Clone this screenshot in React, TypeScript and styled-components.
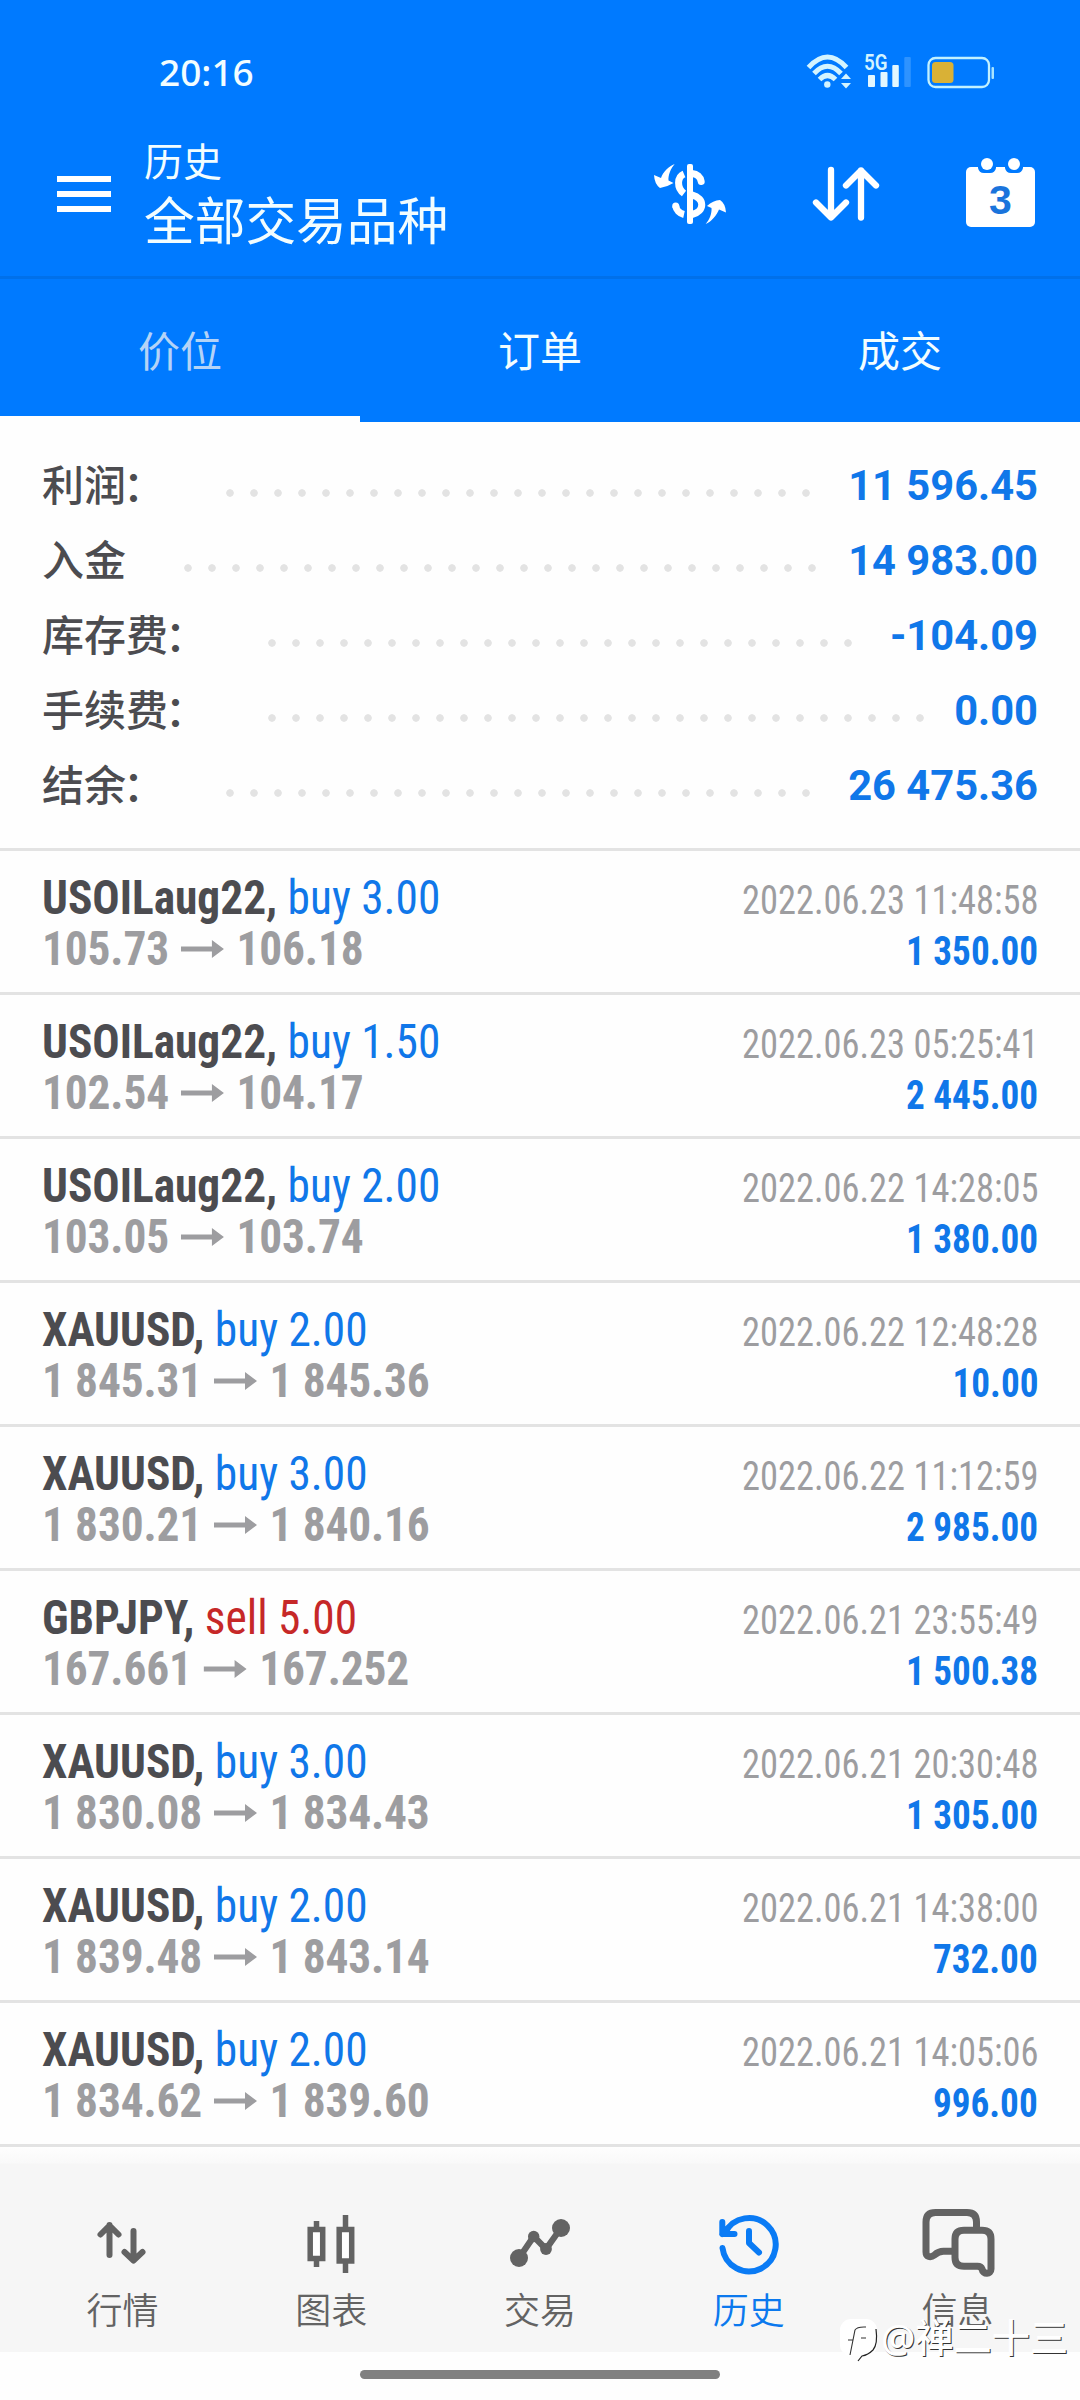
import React from "react";
import styled, { createGlobalStyle } from "styled-components";

const BLUE = "#007aff";
const CJK = `"Noto Sans CJK SC", sans-serif`;

const GlobalStyle = createGlobalStyle`
  * { box-sizing: border-box; }
  body { margin: 0; background: #fff; font-family: Roboto, ${CJK}; }
  svg { display: block; flex: none; }
`;

const Screen = styled.div`
  width: 1080px;
  height: 2400px;
  display: flex;
  flex-direction: column;
  background: #fefefe;
  overflow: hidden;
  position: relative;
`;

const Header = styled.header`
  background: ${BLUE};
  color: #f2fdff;
  height: 422px;
  flex: none;
  display: flex;
  flex-direction: column;
`;

const StatusBar = styled.div`
  height: 130px;
  padding: 14px 80px 0 159px;
  display: flex;
  align-items: center;
  justify-content: space-between;
`;

const Clock = styled.span`
  font: 500 37px/44px "Noto Sans", sans-serif;
`;

const Toolbar = styled.div`
  height: 146px;
  padding: 0 45px 0 57px;
  display: flex;
  align-items: flex-start;
`;

const Burger = styled.div`
  width: 54px;
  margin-top: 46px;
  display: flex;
  flex-direction: column;
  gap: 9px;
  i { height: 6px; background: #fff; }
`;

const Titles = styled.div`
  margin-left: 33px;
  flex: 1;
  font-family: ${CJK};
`;

const Subtitle = styled.div`
  font-size: 39px;
  font-weight: 400;
  line-height: 50px;
  margin-top: 4px;
`;

const Title = styled.div`
  font-size: 50.7px;
  font-weight: 400;
  line-height: 60px;
  margin-top: 4px;
`;

const Actions = styled.div`
  display: flex;
  padding-top: 23px;
`;

const Tabs = styled.div`
  height: 146px;
  border-top: 3px solid #0070ea;
  display: grid;
  grid-template-columns: repeat(3, 1fr);
`;

const Tab = styled.div<{ $active?: boolean }>`
  font-family: ${CJK};
  font-size: 42px;
  font-weight: 400;
  display: flex;
  align-items: center;
  justify-content: center;
  padding-top: 2px;
  color: ${(p) => (p.$active ? "#b4d3f7" : "#f2fdff")};
  border-bottom: 6px solid ${(p) => (p.$active ? "#fefefe" : "transparent")};
`;

const Summary = styled.section`
  height: 429px;
  flex: none;
  padding: 26px 42px 0 42px;
  border-bottom: 3px solid #e3e3e3;
`;

const SummaryRow = styled.div`
  height: 75px;
  display: flex;
  align-items: center;
`;

const SummaryLabel = styled.span`
  font-family: ${CJK};
  font-size: 42px;
  line-height: 62px;
  font-weight: 500;
  color: #4c4c50;
  margin-bottom: 5px;
`;

const Colon = styled.span`
  margin: 0 3px 0 -3px;
`;

const Dots = styled.span<{ $count: number }>`
  margin-left: 58px;
  width: ${(p) => p.$count * 24}px;
  height: 8px;
  margin-top: 15px;
  background: radial-gradient(circle at 4px 4px, #e3e3e3 3.4px, transparent 4.1px) 0 0 / 24px 8px repeat-x;
`;

const SummaryValue = styled.span`
  margin-left: auto;
  font: 700 41.7px/50px Roboto, sans-serif;
  color: #1077e9;
`;

const Deal = styled.article`
  height: 144px;
  flex: none;
  border-bottom: 3px solid #e3e3e3;
  padding: 21px 42px 0;
  display: flex;
  justify-content: space-between;
  font-family: "Roboto Condensed", Roboto, sans-serif;
  font-stretch: 75%;
  white-space: pre;
`;

const Left = styled.div`
  display: flex;
  flex-direction: column;
  transform: scaleX(0.945);
  transform-origin: left;
`;

const Right = styled.div`
  display: flex;
  flex-direction: column;
  align-items: flex-end;
`;

const Line = styled.div`
  font-size: 48px;
  line-height: 51px;
  font-weight: 700;
  color: #4c4c50;
`;

const Side = styled.span<{ $sell?: boolean }>`
  font-weight: 400;
  color: ${(p) => (p.$sell ? "#c62828" : "#1077e9")};
`;

const Prices = styled.div`
  display: flex;
  align-items: center;
  font-size: 48px;
  line-height: 51px;
  font-weight: 700;
  color: #9d9da0;
  letter-spacing: -0.15px;
  svg { margin: 0 13px; }
`;

const Time = styled.div`
  font-size: 40px;
  line-height: 46px;
  color: #9d9da0;
  margin: 6px 0 5px;
  transform: scaleX(0.911);
  transform-origin: right;
`;

const Profit = styled.div`
  font-size: 40px;
  line-height: 46px;
  font-weight: 700;
  color: #1077e9;
  transform: scaleX(0.93);
  transform-origin: right;
`;

const Nav = styled.nav`
  height: 205px;
  flex: none;
  padding: 50px 18px 0;
  display: grid;
  grid-template-columns: repeat(5, 1fr);
  background: linear-gradient(#fefefe 0, #f9f9f9 16px, #f6f6f6 17px);
`;

const NavItem = styled.div<{ $active?: boolean }>`
  display: flex;
  flex-direction: column;
  align-items: center;
  color: ${(p) => (p.$active ? "#0b79ee" : "#636363")};
`;

const NavLabel = styled.span`
  font: 350 36px/44px ${CJK};
  margin-top: -3px;
`;

const HomeArea = styled.div`
  height: 48px;
  display: flex;
  justify-content: center;
  padding-top: 18px;
`;

const HomePill = styled.div`
  width: 360px;
  height: 9px;
  border-radius: 5px;
  background: #808080;
`;

const Watermark = styled.div`
  position: absolute;
  left: 839px;
  top: 2314px;
  display: flex;
  align-items: center;
  color: #fff;
  font: 500 37px/46px "Noto Sans", ${CJK};
  text-shadow: 1px 1px 0 #333;
  white-space: nowrap;
`;

const Handle = styled.span`
  margin-left: 2px;
  font-size: 38.2px;
`;

const StatusIcons = () => (
  <svg width="200" height="44" viewBox="800 50 200 44" fill="none">
    <g stroke="#d3f4ff" strokeWidth="5">
      <path d="M808.5 67.5Q827.5 46.5 846.5 67.5" />
      <path d="M814 73.5Q827.5 59 841 73.5" />
      <path d="M819.5 79.5Q827.5 71.5 835.5 79.5" />
    </g>
    <circle cx="827.3" cy="84.5" r="3.2" fill="#d3f4ff" />
    <path d="M841 79l5-5.5 5 5.5zM841 83l5 5.5 5-5.5z" fill="#d3f4ff" />
    <text x="864" y="70" fill="#d3f4ff" fontFamily="Roboto, sans-serif" fontWeight="600" fontSize="21.5" textLength="23.5" lengthAdjust="spacingAndGlyphs">5G</text>
    <g fill="#e2f7ff">
      <rect x="868" y="75" width="7" height="12" rx="1" />
      <rect x="880.5" y="72" width="7" height="15" rx="1" />
      <rect x="892.3" y="65" width="6.5" height="22" rx="1" />
    </g>
    <rect x="904.3" y="57" width="6.5" height="30" rx="1" fill="#2e93ff" />
    <rect x="928.5" y="58" width="60.5" height="29" rx="7" stroke="#c2f1ff" strokeWidth="2.3" />
    <rect x="932" y="62" width="21.5" height="21" rx="3.5" fill="#d9b136" />
    <rect x="991.5" y="67" width="2.5" height="12" rx="1" fill="#a8e4ff" />
  </svg>
);

const ActionIcons = () => (
  <svg width="385" height="80" viewBox="650 153 385 80" fill="none">
    <g fill="#fff">
      <rect x="687" y="164" width="6" height="60" rx="2" />
      <path d="M674.7 164C669 166 663 172 661 178L654 175Q654.5 184 660 188Q667 187 673.5 183L668.5 180.5C668 175 671 168 674.7 164Z" />
      <path d="M705.7 224C711 222 717 215 719 209.5L726 212.5Q725.5 203.5 720 200Q713 200.5 707 206L711.5 208C712 213 709.5 220 705.7 224Z" />
    </g>
    <g stroke="#fff" strokeWidth="7">
      <path d="M684 174C677 177 676.5 188 684 193.5" />
      <path d="M692 173.5C697 174 700.5 177 701.2 181.5" strokeLinecap="round" />
      <path d="M692 195C705 198 705 211.5 692 214.5" />
      <path d="M675.8 206C676.3 210 679.5 213.5 684 214.5" />
      <path d="M675.7 206V206.1" strokeLinecap="round" />
    </g>
    <g stroke="#fff" strokeWidth="6.3" strokeLinecap="round" strokeLinejoin="round">
      <path d="M831 170V217M816 202.5L831 217.5L846 202.5" />
      <path d="M861 217.5V170.5M846 185.5L861 170.5L876 185.5" />
    </g>
    <rect x="966" y="167" width="69" height="60" rx="5" fill="#fff" />
    <path d="M978 165V168Q979 173 984 173H990Q995 173 996 168V165ZM1005 165V168Q1006 173 1011 173H1017Q1022 173 1023 168V165Z" fill={BLUE} />
    <circle cx="987" cy="164" r="6" fill="#fff" />
    <circle cx="1014" cy="164" r="6" fill="#fff" />
    <text x="1000.5" y="214" textAnchor="middle" fill="#1a74dc" fontFamily="Liberation Sans, sans-serif" fontWeight="700" fontSize="41">3</text>
  </svg>
);

const PriceArrow = () => (
  <svg width="45.5" height="18" viewBox="0 0 43 18" preserveAspectRatio="none" fill="#9d9da0">
    <path d="M0 6.5H31V0L43 9L31 18V11.5H0Z" />
  </svg>
);

const QuotesIcon = () => (
  <svg width="80" height="92" viewBox="82.5 2198 80 92" fill="none" stroke="currentColor" strokeWidth="6" strokeLinecap="round" strokeLinejoin="round">
    <path d="M110 2256V2226M101 2235.5L110 2226.5L119 2235.5" />
    <path d="M134 2232V2261M125 2253L134 2261.5L143 2253" />
  </svg>
);

const ChartIcon = () => (
  <svg width="80" height="92" viewBox="291 2198 80 92" fill="none" stroke="currentColor" strokeWidth="5.5">
    <rect x="310.2" y="2230.5" width="12.5" height="29" fill="#fff" />
    <path d="M316.5 2222V2228M316.5 2262V2268" />
    <rect x="339.2" y="2230.5" width="12.5" height="31.5" fill="#fff" />
    <path d="M345.5 2216V2228M345.5 2264V2274" />
  </svg>
);

const TradeIcon = () => (
  <svg width="80" height="92" viewBox="500 2198 80 92" fill="currentColor">
    <path d="M519 2259L533.7 2237.5L546 2250L561 2229" fill="none" stroke="currentColor" strokeWidth="6.3" />
    <circle cx="519" cy="2259" r="9" />
    <circle cx="533.7" cy="2237.5" r="5.7" />
    <circle cx="546" cy="2250" r="5.9" />
    <circle cx="561" cy="2229" r="9" />
  </svg>
);

const HistoryIcon = () => (
  <svg width="80" height="92" viewBox="709 2198 80 92" fill="none" stroke="#0a7bf5" strokeWidth="6" strokeLinecap="round" strokeLinejoin="round">
    <path d="M725 2234A26.7 26.7 0 1 1 722.5 2249" />
    <path d="M722.3 2223V2235H734.5M722.3 2235L727 2230" />
    <path d="M749 2232V2244L759 2253.5" />
  </svg>
);

const MessagesIcon = () => (
  <svg width="80" height="92" viewBox="917.5 2198 80 92" fill="none" stroke="currentColor" strokeWidth="7" strokeLinejoin="round">
    <path d="M976 2230V2223Q976 2213.5 966.5 2213.5H935Q925.5 2213.5 925.5 2223V2253C925.5 2258 930 2259 934 2256Q938 2252.3 943 2252.3H953" />
    <path d="M963.5 2231.2H981.5Q990.5 2231.2 990.5 2240V2270C990.5 2276 982.5 2275.5 981.5 2270Q980.5 2267.3 977 2267.3H963.5Q954.5 2267.3 954.5 2258.5V2240Q954.5 2231.2 963.5 2231.2Z" fill="#f6f6f6" />
  </svg>
);

const WatermarkLogo = () => (
  <svg width="40" height="46" viewBox="839 2315 40 46" fill="none" overflow="visible">
    <rect x="840" y="2320" width="37" height="37" rx="11" fill="#fff" />
    <path d="M876 2330Q878 2345 873 2351Q868 2356 862 2357L858 2362" stroke="#222" strokeWidth="1.2" />
    <path d="M848 2341H853L855 2331Q857 2327.5 866 2328M853 2341L850 2356M861 2339H866" stroke="#333" strokeWidth="1.1" />
  </svg>
);

const summary = [
  { label: "利润", colon: true, value: "11 596.45", dots: 25 },
  { label: "入金", colon: false, value: "14 983.00", dots: 27 },
  { label: "库存费", colon: true, value: "-104.09", dots: 25 },
  { label: "手续费", colon: true, value: "0.00", dots: 28 },
  { label: "结余", colon: true, value: "26 475.36", dots: 25 },
];

const deals = [
  ["USOILaug22", "buy 3.00", "105.73", "106.18", "2022.06.23 11:48:58", "1 350.00"],
  ["USOILaug22", "buy 1.50", "102.54", "104.17", "2022.06.23 05:25:41", "2 445.00"],
  ["USOILaug22", "buy 2.00", "103.05", "103.74", "2022.06.22 14:28:05", "1 380.00"],
  ["XAUUSD", "buy 2.00", "1 845.31", "1 845.36", "2022.06.22 12:48:28", "10.00"],
  ["XAUUSD", "buy 3.00", "1 830.21", "1 840.16", "2022.06.22 11:12:59", "2 985.00"],
  ["GBPJPY", "sell 5.00", "167.661", "167.252", "2022.06.21 23:55:49", "1 500.38"],
  ["XAUUSD", "buy 3.00", "1 830.08", "1 834.43", "2022.06.21 20:30:48", "1 305.00"],
  ["XAUUSD", "buy 2.00", "1 839.48", "1 843.14", "2022.06.21 14:38:00", "732.00"],
  ["XAUUSD", "buy 2.00", "1 834.62", "1 839.60", "2022.06.21 14:05:06", "996.00"],
];

const navItems = [
  { label: "行情", Icon: QuotesIcon },
  { label: "图表", Icon: ChartIcon },
  { label: "交易", Icon: TradeIcon },
  { label: "历史", Icon: HistoryIcon, active: true },
  { label: "信息", Icon: MessagesIcon },
];

export default function App() {
  return (
    <Screen>
      <GlobalStyle />
      <Header>
        <StatusBar>
          <Clock>20:16</Clock>
          <StatusIcons />
        </StatusBar>
        <Toolbar>
          <Burger>
            <i />
            <i />
            <i />
          </Burger>
          <Titles>
            <Subtitle>历史</Subtitle>
            <Title>全部交易品种</Title>
          </Titles>
          <Actions>
            <ActionIcons />
          </Actions>
        </Toolbar>
        <Tabs>
          <Tab $active>价位</Tab>
          <Tab>订单</Tab>
          <Tab>成交</Tab>
        </Tabs>
      </Header>
      <Summary>
        {summary.map((row) => (
          <SummaryRow key={row.label}>
            <SummaryLabel>
              {row.label}
              {row.colon && <Colon>：</Colon>}
            </SummaryLabel>
            <Dots $count={row.dots} />
            <SummaryValue>{row.value}</SummaryValue>
          </SummaryRow>
        ))}
      </Summary>
      {deals.map(([symbol, side, open, close, time, profit]) => (
        <Deal key={time}>
          <Left>
            <Line>
              {symbol}, <Side $sell={side.startsWith("sell")}>{side}</Side>
            </Line>
            <Prices>
              {open}
              <PriceArrow />
              {close}
            </Prices>
          </Left>
          <Right>
            <Time>{time}</Time>
            <Profit>{profit}</Profit>
          </Right>
        </Deal>
      ))}
      <Nav>
        {navItems.map(({ label, Icon, active }) => (
          <NavItem key={label} $active={active}>
            <Icon />
            <NavLabel>{label}</NavLabel>
          </NavItem>
        ))}
      </Nav>
      <HomeArea>
        <HomePill />
      </HomeArea>
      <Watermark>
        <WatermarkLogo />
        <Handle>@禅二十三</Handle>
      </Watermark>
    </Screen>
  );
}
